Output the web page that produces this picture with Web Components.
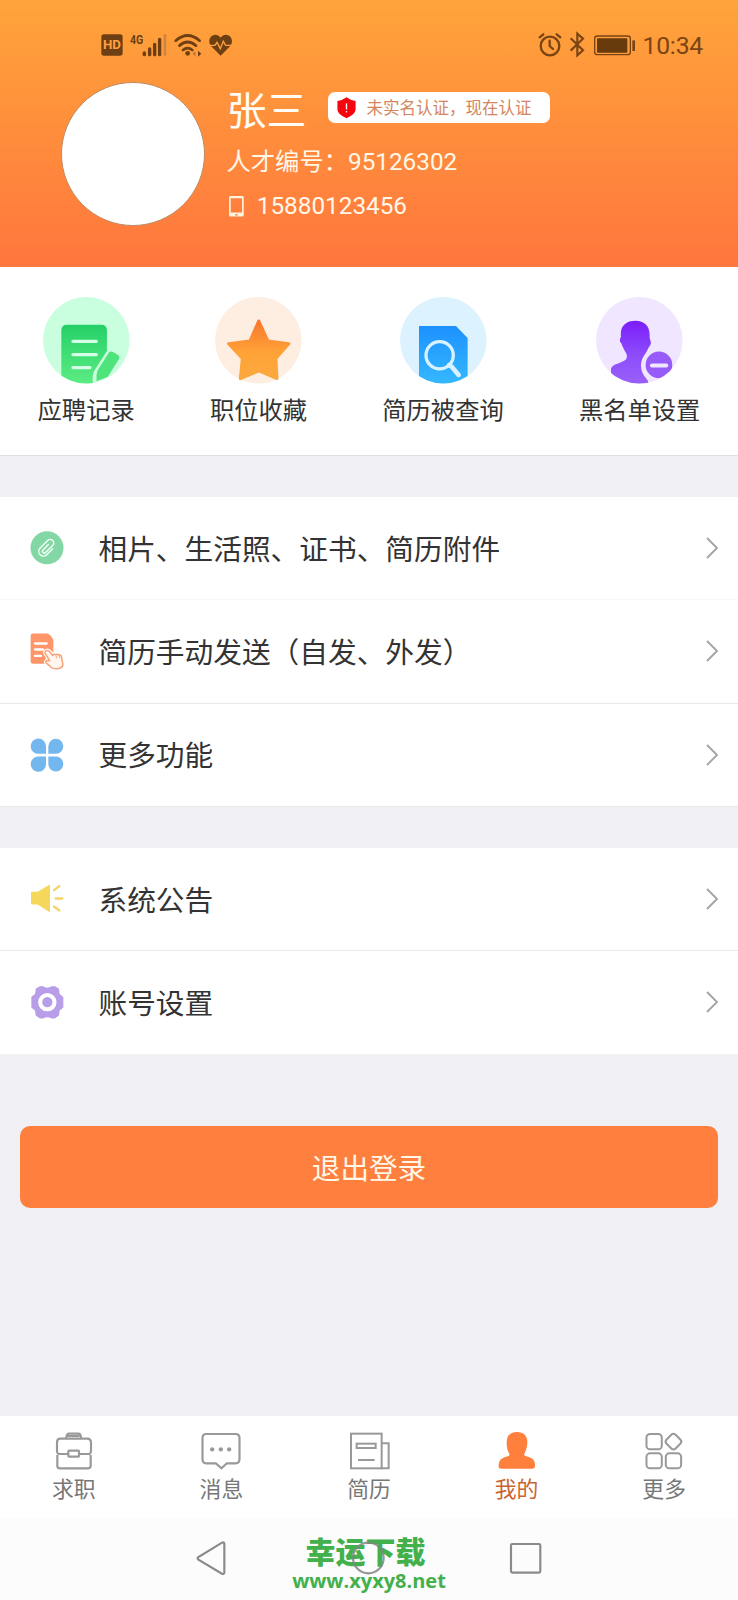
<!DOCTYPE html>
<html lang="zh-CN">
<head>
<meta charset="utf-8">
<title>我的</title>
<style>
html,body{margin:0;padding:0}
body{width:738px;height:1600px;overflow:hidden;background:#efeff4;font-family:Roboto,"Noto Sans CJK SC",sans-serif;color:#333}
</style>
</head>
<body>
<profile-page></profile-page>
<script>
// Each icon: [viewBox, width, height, markup]
const ICONS = {
  hd: ['0 0 66 66', 22, 22, '<rect x="1" y="1" width="64" height="64" rx="8" fill="#6e3f12"/><text x="33" y="46" text-anchor="middle" font-family="Roboto" font-weight="700" font-size="37" textLength="54" lengthAdjust="spacingAndGlyphs" fill="#ffa03e">HD</text>'],
  signal: ['120 38 112 72', 37.3, 24, '<text x="120" y="70" font-family="Roboto" font-weight="700" font-size="40" textLength="40" lengthAdjust="spacingAndGlyphs" fill="#6e3f12">4G</text><g stroke="#6e3f12" stroke-width="10" stroke-linecap="round"><path d="M163 98v5M179 86v17M194 72v31M209 57v46"/></g><path d="M225 45v58" stroke="#d18340" stroke-width="8" stroke-linecap="round"/>'],
  wifi: ['248 38 84 72', 28, 24, '<g fill="none" stroke="#6e3f12" stroke-width="8" stroke-linecap="round"><path d="M253 61Q289 30 325 61M264 76Q289 54 314 76M275 89Q289 78 303 89"/></g><circle cx="289" cy="99" r="7" fill="#6e3f12"/><path d="M304 100l8-8v16z" fill="#b9702f"/><path d="M330 100l-10-9v18z" fill="#6e3f12"/>'],
  heart: ['350 43 70 66', 23.3, 22, '<path d="M385 108L356 79C345 64 353 46 368 45c8 0 13 3 17 9 4-6 9-9 17-9 15 1 23 19 12 34z" fill="#6e3f12"/><path d="M350 77h18l6-9 10 19 9-22 7 12h20" fill="none" stroke="#ff9d3d" stroke-width="4"/>'],
  alarm: ['52 40 72 72', 24, 24, '<g fill="none" stroke="#7a4414" stroke-width="7" stroke-linecap="round"><circle cx="88" cy="79" r="28"/><path d="M57 53l11-9M119 53l-11-9M87 63v16l10 9"/></g>'],
  bluetooth: ['144 38 48 76', 16, 25.3, '<path d="M149 57l37 36-17 15V43l17 15-37 36" fill="none" stroke="#7a4414" stroke-width="6.5"/>'],
  battery: ['222 44 126 62', 42, 20.7, '<rect x="224" y="47" width="107" height="56" rx="8" fill="none" stroke="#7a4414" stroke-width="4"/><rect x="231" y="54" width="91" height="43" rx="2" fill="#683b0c"/><path d="M341 60v32" stroke="#7a4414" stroke-width="8"/>'],
  shield: ['0 0 56 64', 19, 21.5, '<path d="M28 1Q38 9 55 12v26Q54 52 28 63 2 52 1 38V12Q18 9 28 1z" fill="#f5060f"/><path d="M28 19v18" stroke="#fff" stroke-width="4"/><circle cx="28" cy="44" r="2.4" fill="#fff"/>'],
  phone: ['0 0 44 62', 14.8, 20.6, '<path fill-rule="evenodd" d="M4 0h36q4 0 4 4v54q0 4-4 4H4q-4 0-4-4V4q0-4 4-4zM5 7v43h34V7zM18 55v4h8v-4z" fill="#fff4dc"/>'],
  record: ['68 52 260 260', 86.6, 86.6, '<defs><linearGradient id="g" x1="0" y1="0" x2="0" y2="1"><stop stop-color="#24d068"/><stop offset="1" stop-color="#5cec82"/></linearGradient><clipPath id="c"><circle cx="198" cy="182" r="130"/></clipPath></defs><circle cx="198" cy="182" r="130" fill="#c9fede"/><g clip-path="url(#c)"><path d="M140 135h103q17 0 17 17v62L221 275q-6 15-3 38h-95V152q0-17 17-17z" fill="url(#g)"/><path d="M158 185h70M158 225h70M158 264h51" stroke="#d5ffe6" stroke-width="10" stroke-linecap="round"/></g><path d="M266 219q5-6 12-2l15 9q7 5 3 12l-30 48q-3 6-9 8l-28 11q-3-18 3-33z" fill="#4fe37b"/>'],
  star: ['585 52 260 260', 86.6, 86.6, '<defs><linearGradient id="g" x1="0" y1="0" x2="0" y2="1"><stop stop-color="#f9772d"/><stop offset=".55" stop-color="#ffa337"/><stop offset="1" stop-color="#fba83e"/></linearGradient></defs><circle cx="715" cy="182" r="130" fill="#feeee1"/><path d="M716 124L744 184 807 192 768 237 771 297 717 274 661 297 667 237 626 192 690 184z" fill="url(#g)" stroke="url(#g)" stroke-width="9" stroke-linejoin="round"/><path d="M678 308l39-28 38 28z" fill="#feeee1"/>'],
  search: ['90 52 260 260', 86.6, 86.6, '<defs><linearGradient id="g" x1="0" y1="0" x2="0" y2="1"><stop stop-color="#1c91ff"/><stop offset="1" stop-color="#35b8ff"/></linearGradient><clipPath id="c"><circle cx="220" cy="182" r="130"/></clipPath></defs><circle cx="220" cy="182" r="130" fill="#dcf2ff"/><path clip-path="url(#c)" d="M147 139h111l35 36v138H147z" fill="url(#g)"/><circle cx="209" cy="227" r="41" fill="none" stroke="#d9f2ff" stroke-width="10"/><path d="M237 257l8 4 21 25" fill="none" stroke="#d9f2ff" stroke-width="14" stroke-linecap="round"/>'],
  block: ['680 52 260 260', 86.6, 86.6, '<defs><linearGradient id="g" x1="0" y1="0" x2="0" y2="1"><stop stop-color="#7c1dfb"/><stop offset=".55" stop-color="#8d4efa"/><stop offset="1" stop-color="#9a60fa"/></linearGradient><clipPath id="c"><circle cx="810" cy="182" r="130"/></clipPath></defs><circle cx="810" cy="182" r="130" fill="#f0e6ff"/><g clip-path="url(#c)"><path d="M798 123c29 0 45 18 43 48 0 10 6 14 3 23-2 6-5 8-7 12-4 9-10 19-13 25-6 15-11 35 12 73l2 12H725v-48c3-15 28-16 42-26q9-7 4-20c-5-9-12-21-15-31-6-2-5-15-1-20-4-31 14-48 43-48z" fill="url(#g)"/><circle cx="869" cy="258" r="54" fill="#f0e6ff"/><circle cx="869" cy="256" r="40" fill="#965bf8"/></g><path d="M848 258h43" stroke="#f0e6ff" stroke-width="12" stroke-linecap="round"/>'],
  clip: ['87 121.5 108 108', 36, 36, '<circle cx="141" cy="175" r="49.5" fill="#82d7a5"/><path transform="translate(141 175) rotate(45)" d="M14-10V15a14 14 0 0 1-28 0V-17a10.500 10.500 0 0 1 21 0V13a5.500 5.500 0 0 1-11 0V-10" fill="none" stroke="#f2fff7" stroke-width="4.500" stroke-linecap="round"/>'],
  send: ['87 430.5 108 108', 36, 36, '<path d="M99 432h44q12 6 17 20v70q-2 1-5 1H99q-7 0-7-7v-77q0-7 7-7z" fill="#ff9568"/><path d="M105 462h35M105 480h24M105 499h18" stroke="#fff" stroke-width="7" stroke-linecap="round"/><path d="M136 486q6-7 13 0l9 11q3-6 9-2 6-4 10 1 8-2 8 8l3 16q3 12-9 16-17 4-25-2l-12-11q-8-4-2-10l8 1-11-20q-4-5-1-8z" fill="#fff" stroke="#fff" stroke-width="11"/><path d="M136 486q6-6 13 1l9 11q3-6 9-2 6-4 10 1 8-2 8 8l3 15q3 12-9 16-17 4-25-2l-12-11q-8-4-2-10l9 1-12-20q-4-5-1-8z" fill="#fff6f0" stroke="#f5a47b" stroke-width="4.5" stroke-linejoin="round"/><path d="M168 498l2 8M178 499l2 7" stroke="#f5a47b" stroke-width="3"/>'],
  clover: ['87 739.5 108 108', 36, 36, '<path d="M138 790h-21a23 23 0 1 1 21-23zM145 790v-23a22.500 22.500 0 1 1 23 23zM138 798v22a23 23 0 1 1-23-22zM145 798h23a22.500 22.500 0 1 1-23 23z" fill="#73b7ee"/>'],
  horn: ['87 124.5 108 108', 36, 36, '<path d="M96 157h17l35-21q2 0 2 3v77q0 3-3 1l-34-22H96q-3 0-3-3v-32q0-3 3-3z" fill="#f5d759"/><path d="M162 152l16-12M167 177h20M162 201l16 12" stroke="#f0d568" stroke-width="7" stroke-linecap="round"/>'],
  gear: ['87 433.5 108 108', 36, 36, '<path d="M120 442h8q14 9 28 0h8l11 7 2 15 11 9v30l-11 9-2 15-11 8h-8q-14-8-28 0h-8l-11-8-2-15-11-9v-30l11-9 2-15z" fill="#b89de8" stroke="#b89de8" stroke-width="4" stroke-linejoin="round"/><circle cx="142" cy="488" r="21.500" fill="#b89de8" stroke="#fff" stroke-width="12"/>'],
  chevron: ['0 0 36 66', 12, 22, '<path d="M3 3l30 30L3 63" fill="none" stroke="#a3a3a3" stroke-width="5.5"/>'],
  job: ['155 72 132 132', 44, 44, '<g fill="none" stroke="#999" stroke-width="6.5"><path d="M198 100q0-14 8-14h28q8 0 8 14M202 93h35"/><path d="M180 101h80q12 0 12 12v23q0 11-6 11h-29M204 147h-28q-6 0-6-11v-23q0-12 10-12M171 150v32q0 8 8 8h83q9 0 9-8v-32"/><rect x="204" y="137" width="32" height="18" rx="2" fill="#fff"/></g>'],
  message: ['598.5 72 132 132', 44, 44, '<path d="M620 87h88q12 0 12 12v64q0 12-12 12h-26l-16 15-17-15h-29q-11 0-11-12V99q0-12 11-12z" fill="none" stroke="#999" stroke-width="6.5"/><g fill="#999"><circle cx="638" cy="133" r="6.5"/><circle cx="664" cy="133" r="6.5"/><circle cx="689" cy="133" r="6.5"/></g>'],
  resume: ['1041 72 132 132', 44, 44, '<g fill="none" stroke="#999" stroke-width="6"><rect x="1053" y="86" width="92" height="104"/><path d="M1145 115h21v75h-24"/><rect x="1070" y="116" width="57" height="13"/><path d="M1074 165h50"/></g>'],
  me: ['380 72 132 132', 44, 44, '<path d="M446 81c21 0 32 13 31 32-1 19-7 29-10 36 4 6 13 5 20 9 10 5 14 13 13 25 0 6-3 8-9 8h-91c-7 0-10-3-9-10 0-12 5-19 14-23 7-4 16-3 19-9-4-9-9-18-9-36 0-20 10-32 31-32z" fill="#ff7f3d"/>'],
  more: ['822.600 72 132 132', 44, 44, '<g fill="none" stroke="#999" stroke-width="6"><rect x="836" y="87" width="46" height="46" rx="11"/><rect x="836" y="145" width="46" height="45" rx="11"/><rect x="894" y="145" width="46" height="45" rx="11"/><rect x="898" y="91" width="38" height="38" rx="9" transform="rotate(45 917 110)"/></g>'],
  back: ['48 78 90 104', 30, 34.700, '<path d="M126 83q7-3 7 4v85q0 7-7 4L54 133q-3-3 0-6z" fill="none" stroke="#8a8a8a" stroke-width="6.5"/>'],
  home: ['518 80 98 102', 32.700, 34, '<circle cx="567" cy="131" r="46" fill="none" stroke="#808680" stroke-opacity=".85" stroke-width="6.5"/>'],
  recent: ['990 84 94 92', 31.300, 30.700, '<rect x="993" y="87" width="88" height="86" rx="4" fill="none" stroke="#8a8a8a" stroke-width="6.5"/>']
};

class AppIcon extends HTMLElement {
  connectedCallback() {
    const [box, w, h, body] = ICONS[this.getAttribute('name')];
    this.attachShadow({mode: 'open'}).innerHTML =
      `<style>:host{display:block;flex:none;width:${w}px;height:${h}px}svg{display:block;overflow:visible}</style>
       <svg width="${w}" height="${h}" viewBox="${box}" aria-hidden="true">${body}</svg>`;
  }
}
customElements.define('app-icon', AppIcon);

const define = (name, html) => customElements.define(name, class extends HTMLElement {
  connectedCallback() {
    const t = document.createElement('template');
    t.innerHTML = html.replace(/\{(\w+)\}/g, (m, k) => this.getAttribute(k) || '');
    this.attachShadow({mode: 'open'}).append(t.content.cloneNode(true));
  }
});

define('status-bar', `<style>
:host{display:flex;align-items:center;height:46px;padding:22px 35px 0 100.500px;color:#7a4414}
.left,.right{display:flex;align-items:center}
.left{gap:7px;flex:1}
.right{gap:7px}
app-icon[name=battery]{margin-left:2px}
time{font-size:24.700px;line-height:30px;letter-spacing:-.2px;padding-top:1px}
</style>
<div class="left"><app-icon name="hd"></app-icon><app-icon name="signal"></app-icon><app-icon name="wifi"></app-icon><app-icon name="heart"></app-icon></div>
<div class="right"><app-icon name="alarm"></app-icon><app-icon name="bluetooth"></app-icon><app-icon name="battery"></app-icon><time>10:34</time></div>`);

define('profile-header', `<style>
:host{display:block;height:267px;background:linear-gradient(#ffa43a,#ff763e)}
.body{display:flex;padding:14px 0 0 61px;gap:21.500px}
.avatar{box-sizing:border-box;width:144px;height:144px;border-radius:50%;background:#fff;border:1px solid #bd8b62}
.info{display:flex;flex-direction:column;color:#fff8e8}
.name{display:flex;align-items:center;gap:21.500px;height:58px;margin-top:-2px}
.name b{font-weight:400;font-size:40px;line-height:54px;color:#fffdf5;padding-top:5px}
.badge{box-sizing:border-box;display:flex;align-items:center;gap:10.500px;width:222px;height:31px;border-radius:7px;background:#fff;padding-left:9px;font-size:16.500px;line-height:31px;color:#d48660;white-space:nowrap;margin-bottom:3px}
.badge span{padding-top:2px}
.line{display:flex;align-items:center;height:44px;font-size:24.300px;line-height:44px;white-space:nowrap;padding-top:2px;margin-bottom:-2px}
.phone{gap:13.500px;padding-left:2px}
</style>
<status-bar></status-bar>
<div class="body"><div class="avatar"></div>
<div class="info">
<div class="name"><b>张三</b><div class="badge"><app-icon name="shield"></app-icon><span>未实名认证，现在认证</span></div></div>
<div class="line">人才编号：95126302</div>
<div class="line phone"><app-icon name="phone"></app-icon><span>15880123456</span></div>
</div></div>`);

define('quick-item', `<style>
:host{display:flex;flex-direction:column;align-items:center;font-size:24.300px;line-height:36px;white-space:nowrap}
span{margin-top:9px}
</style><app-icon name="{icon}"></app-icon><span><slot></slot></span>`);

define('menu-row', `<style>
:host{box-sizing:border-box;display:flex;align-items:center;height:103.250px;padding:0 20.500px 0 29px;background:#fff;border-bottom:1px solid #e9e9eb;font-size:28.700px;line-height:42px}
span{flex:1;margin:3px 0 0 33.500px;white-space:nowrap}
</style><app-icon name="{icon}"></app-icon><span><slot></slot></span><app-icon name="chevron"></app-icon>`);

define('tab-item', `<style>
:host{display:flex;flex:1;flex-direction:column;align-items:center;padding-top:13px;color:#777;font-size:21.800px;line-height:32px}
:host([active]){color:#c96532}
span{margin-top:1px}
</style><app-icon name="{icon}"></app-icon><span><slot></slot></span>`);

define('system-nav', `<style>
:host{position:relative;display:flex;align-items:center;justify-content:space-between;box-sizing:border-box;height:82px;padding:0 197px 2px 196px;background:#fcfcfc}
app-icon{z-index:1}
.mark{position:absolute;left:0;top:17px;width:738px;display:flex;flex-direction:column;align-items:center;color:#42b04b;font-weight:700;white-space:nowrap}
.mark b{font-size:30px;line-height:36px;font-weight:900;margin-right:7px}
.mark span{font-family:"Open Sans",sans-serif;font-size:20px;line-height:24px;margin-top:-2px}
</style><app-icon name="back"></app-icon><app-icon name="home"></app-icon><app-icon name="recent"></app-icon>
<div class="mark"><b>幸运下载</b><span>www.xyxy8.net</span></div>`);

define('profile-page', `<style>
:host{display:flex;flex-direction:column;width:738px;height:1600px;background:#efeff4}
.quick{box-sizing:border-box;display:flex;justify-content:space-around;height:189px;padding-top:30.300px;background:#fff;border-bottom:1px solid #e0e0e4}
.group{margin-top:41px}
.group+.group{margin-top:41.250px}
.soft{border-bottom-color:#f8f8f9}
.last{border-bottom-color:#f4f4f7}
.logout{margin:71.500px 20px 0;height:82px;border:0;border-radius:10px;background:#ff7f3e;color:#fff8e8;font:28.600px/80px Roboto,"Noto Sans CJK SC",sans-serif;text-align:center;padding:3px 0 0;box-sizing:border-box}
.tabs{display:flex;margin-top:auto;height:102px;background:#fff}
</style>
<profile-header></profile-header>
<div class="quick">
<quick-item icon="record">应聘记录</quick-item><quick-item icon="star">职位收藏</quick-item><quick-item icon="search">简历被查询</quick-item><quick-item icon="block">黑名单设置</quick-item>
</div>
<div class="group">
<menu-row class="soft" icon="clip">相片、生活照、证书、简历附件</menu-row>
<menu-row icon="send">简历手动发送（自发、外发）</menu-row>
<menu-row icon="clover">更多功能</menu-row>
</div>
<div class="group">
<menu-row icon="horn">系统公告</menu-row>
<menu-row class="last" icon="gear">账号设置</menu-row>
</div>
<button class="logout">退出登录</button>
<div class="tabs">
<tab-item icon="job">求职</tab-item><tab-item icon="message">消息</tab-item><tab-item icon="resume">简历</tab-item><tab-item icon="me" active>我的</tab-item><tab-item icon="more">更多</tab-item>
</div>
<system-nav></system-nav>`);
</script>
</body>
</html>
